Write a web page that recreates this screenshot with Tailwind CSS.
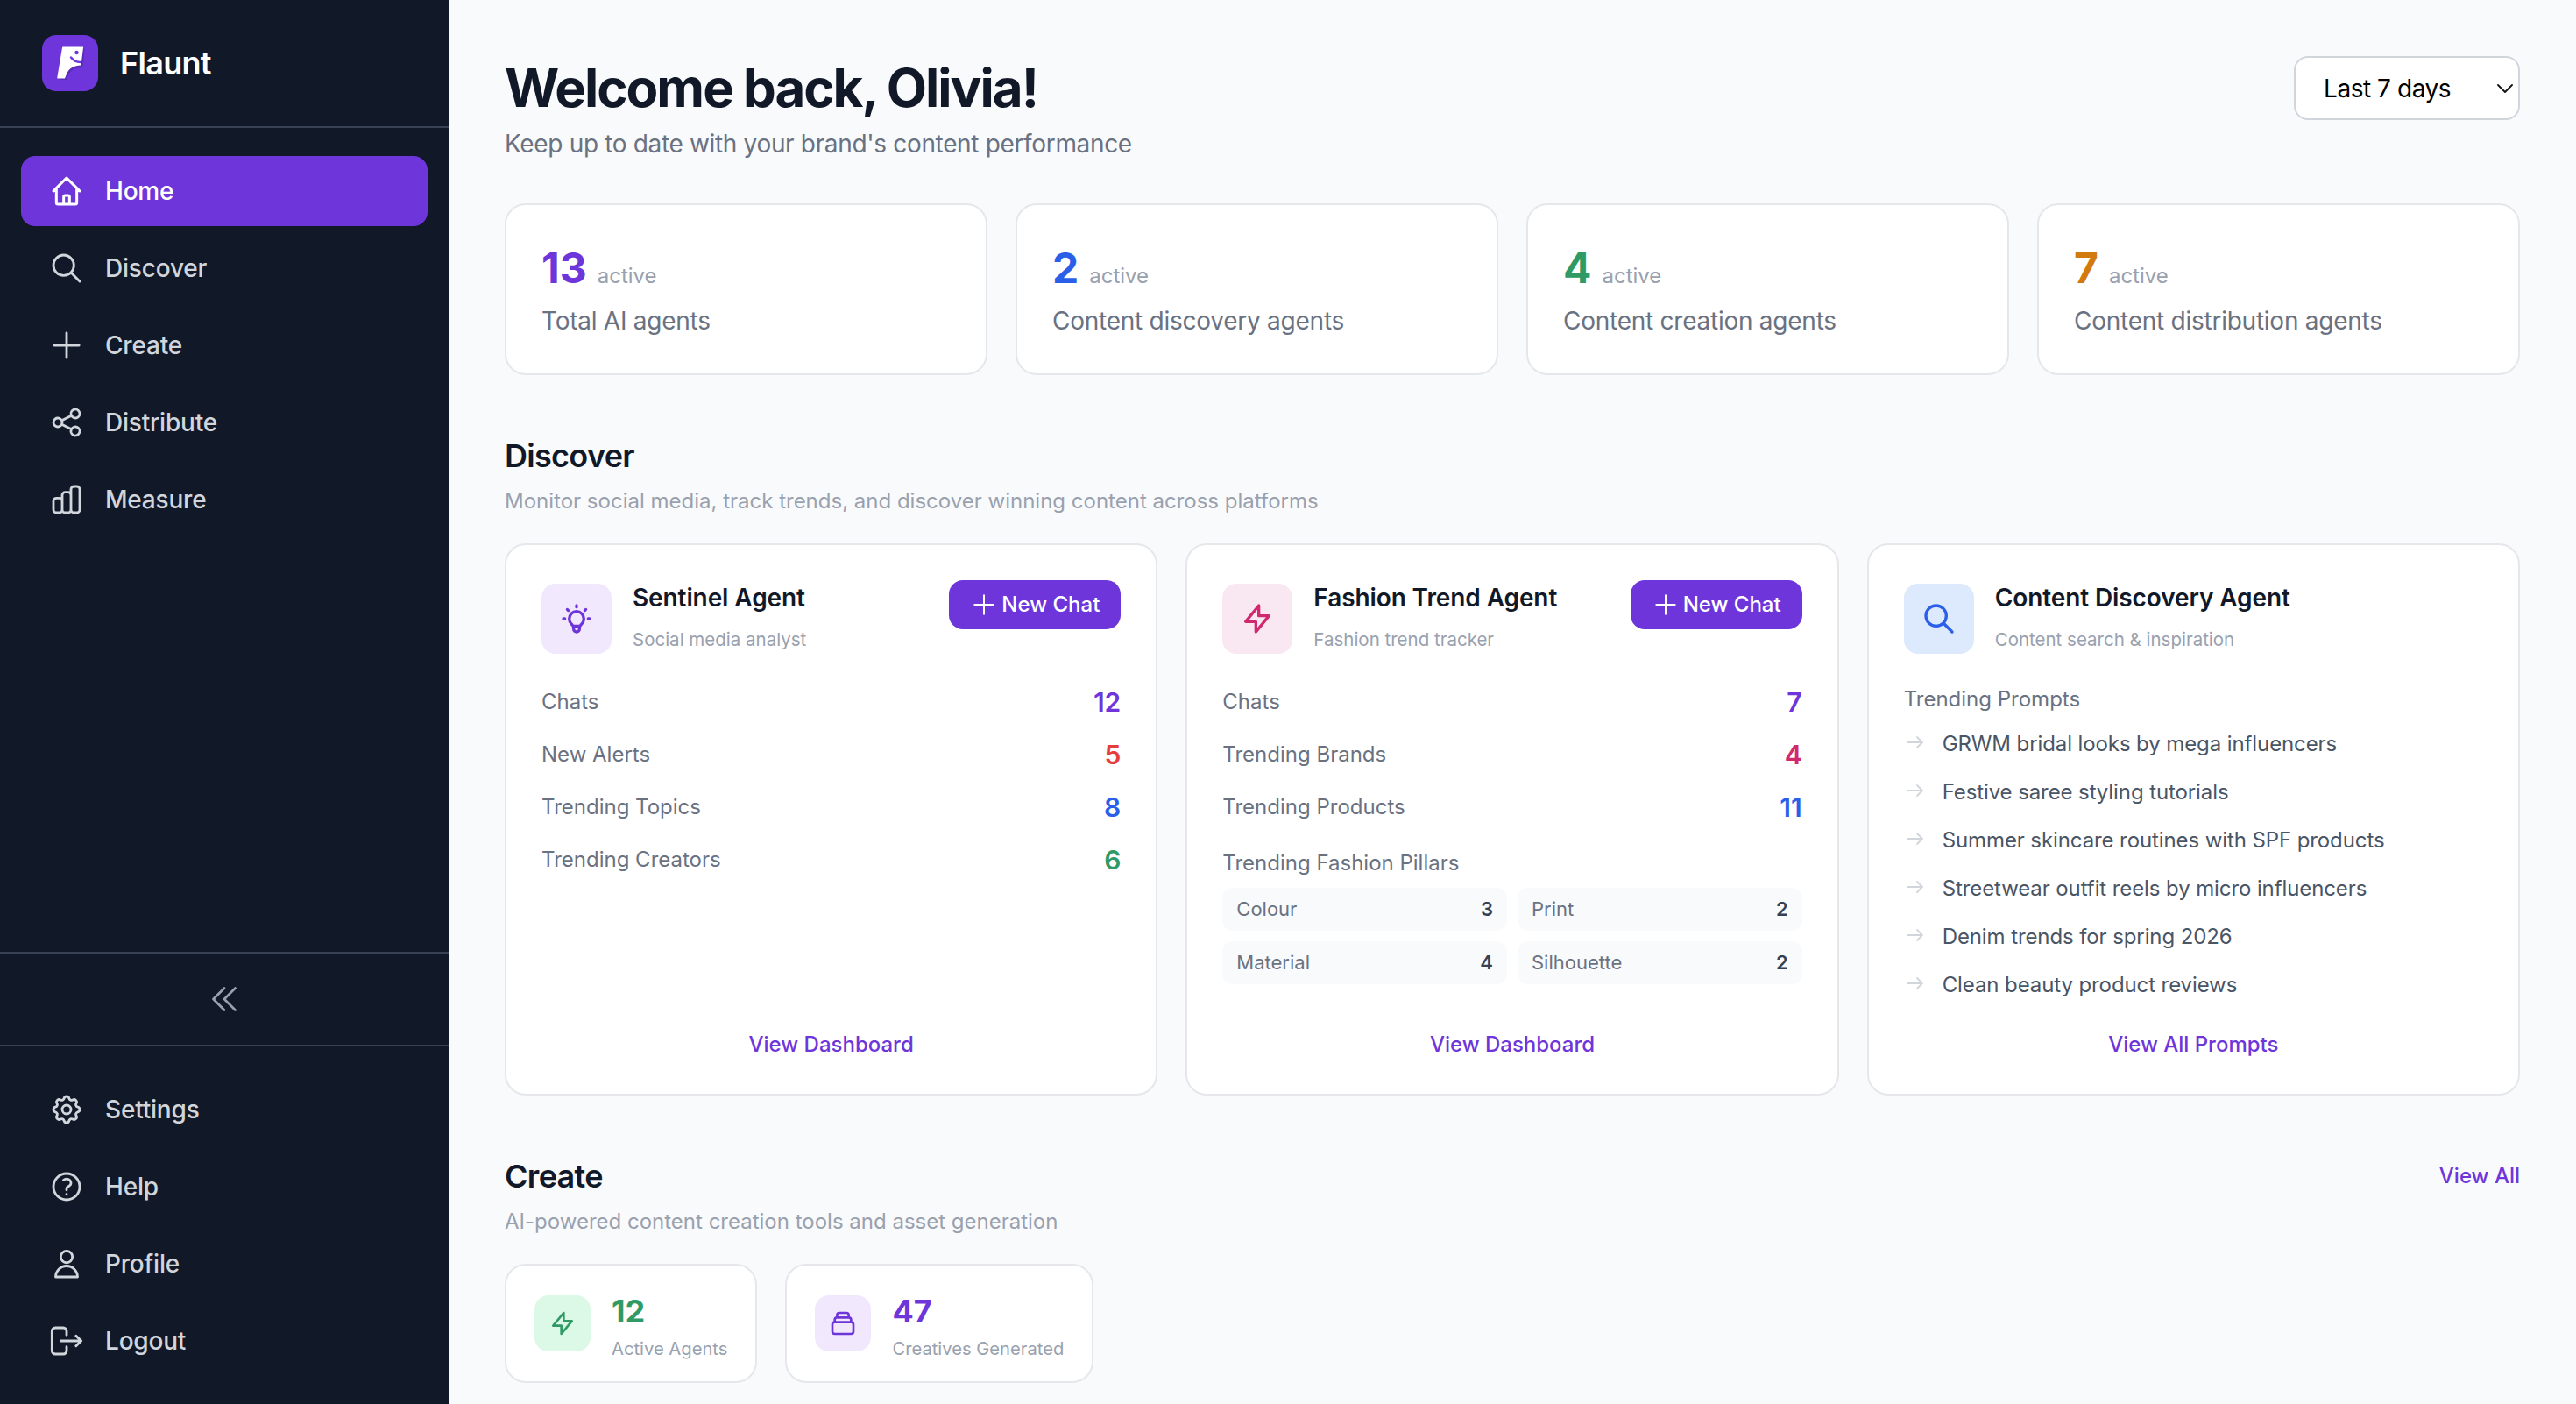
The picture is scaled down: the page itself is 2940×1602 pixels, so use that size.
<!DOCTYPE html>
<html lang="en">
<head>
    <meta charset="UTF-8">
    <meta name="viewport" content="width=device-width, initial-scale=1.0">
    <title>Flaunt Dashboard</title>
    <script src="https://cdn.jsdelivr.net/npm/@tailwindcss/browser@4"></script>
</head>
<body class="bg-gray-50 font-[Inter,sans-serif] antialiased">
<div class="flex h-[1602px] w-[2940px] overflow-hidden">

    <!-- Sidebar -->
    <aside class="flex w-[512px] shrink-0 flex-col bg-[#111827]">
        <div class="flex h-[146px] items-center gap-[25px] border-b-2 border-gray-700 px-[48px]">
            <svg class="h-[64px] w-[64px] shrink-0" viewBox="0 0 64 64">
                <rect width="64" height="64" rx="16" fill="#6e36da"/>
                <path d="M25.5 15.5H48.5L46.5 37C38 37.5 32 40 29.5 46.5L28 51H19.5Z" fill="#5a2bbb"/>
                <path d="M24 13.5H46.5C47 13.5 47 14 47 14.5L44.5 34.5C36 35 30.5 38 28 44.5L26 49.5H18C17.5 49.5 17.2 49 17.3 48.5L23 14.5C23 14 23.5 13.5 24 13.5Z" fill="#fff"/>
                <circle cx="39.5" cy="20" r="2.2" fill="#6e36da"/>
                <path d="M33 25.5C36 29.5 40 31 44 31" fill="none" stroke="#6e36da" stroke-width="2.4" stroke-linecap="round"/>
            </svg>
            <span class="text-[36px] leading-[44px] font-semibold tracking-[-0.7px] text-white">Flaunt</span>
        </div>

        <nav class="flex flex-1 flex-col gap-[8px] p-[24px] pt-[32px]">
            <a class="flex h-[80px] items-center gap-[24px] rounded-[16px] bg-[#6e36da] px-[32px] text-[28px] font-medium tracking-[-0.2px] text-white">
                <svg class="h-[40px] w-[40px]" fill="none" stroke="currentColor" stroke-width="1.8" stroke-linecap="round" stroke-linejoin="round" viewBox="0 0 24 24"><path d="M3 12l2-2m0 0l7-7 7 7M5 10v10a1 1 0 001 1h3m10-11l2 2m-2-2v10a1 1 0 01-1 1h-3m-6 0a1 1 0 001-1v-4a1 1 0 011-1h2a1 1 0 011 1v4a1 1 0 001 1m-6 0h6"/></svg>
                Home
            </a>
            <a class="flex h-[80px] items-center gap-[24px] rounded-[16px] px-[32px] text-[28px] font-medium tracking-[-0.2px] text-gray-300">
                <svg class="h-[40px] w-[40px]" fill="none" stroke="currentColor" stroke-width="1.7" stroke-linecap="round" stroke-linejoin="round" viewBox="0 0 24 24"><path d="M21 21l-6-6m2-5a7 7 0 11-14 0 7 7 0 0114 0z"/></svg>
                Discover
            </a>
            <a class="flex h-[80px] items-center gap-[24px] rounded-[16px] px-[32px] text-[28px] font-medium tracking-[-0.2px] text-gray-300">
                <svg class="h-[40px] w-[40px]" fill="none" stroke="currentColor" stroke-width="1.7" stroke-linecap="round" stroke-linejoin="round" viewBox="0 0 24 24"><path d="M12 3.5v17m8.5-8.5h-17"/></svg>
                Create
            </a>
            <a class="flex h-[80px] items-center gap-[24px] rounded-[16px] px-[32px] text-[28px] font-medium tracking-[-0.2px] text-gray-300">
                <svg class="h-[40px] w-[40px]" fill="none" stroke="currentColor" stroke-width="1.7" stroke-linecap="round" stroke-linejoin="round" viewBox="0 0 24 24"><path d="M8.684 13.342C8.886 12.938 9 12.482 9 12c0-.482-.114-.938-.316-1.342m0 2.684a3 3 0 110-2.684m0 2.684l6.632 3.316m-6.632-6l6.632-3.316m0 0a3 3 0 105.367-2.684 3 3 0 00-5.367 2.684zm0 9.316a3 3 0 105.368 2.684 3 3 0 00-5.368-2.684z"/></svg>
                Distribute
            </a>
            <a class="flex h-[80px] items-center gap-[24px] rounded-[16px] px-[32px] text-[28px] font-medium tracking-[-0.2px] text-gray-300">
                <svg class="h-[40px] w-[40px]" fill="none" stroke="currentColor" stroke-width="1.7" stroke-linecap="round" stroke-linejoin="round" viewBox="0 0 24 24"><path d="M9 19v-6a2 2 0 00-2-2H5a2 2 0 00-2 2v6a2 2 0 002 2h2a2 2 0 002-2zm0 0V9a2 2 0 012-2h2a2 2 0 012 2v10m-6 0a2 2 0 002 2h2a2 2 0 002-2m0 0V5a2 2 0 012-2h2a2 2 0 012 2v14a2 2 0 01-2 2h-2a2 2 0 01-2-2z"/></svg>
                Measure
            </a>
        </nav>

        <div class="flex h-[108px] items-center justify-center border-y-2 border-gray-700 text-gray-400">
            <svg class="h-[40px] w-[40px]" fill="none" stroke="currentColor" stroke-width="1.6" stroke-linecap="round" stroke-linejoin="round" viewBox="0 0 24 24"><path d="M19.5 19.5L12 12l7.5-7.5M12 19.5L4.5 12 12 4.5"/></svg>
        </div>

        <div class="flex flex-col gap-[8px] p-[24px] pt-[32px] pb-[32px]">
            <a class="flex h-[80px] items-center gap-[24px] px-[32px] text-[28px] font-medium tracking-[-0.2px] text-gray-300">
                <svg class="h-[40px] w-[40px]" fill="none" stroke="currentColor" stroke-width="1.7" stroke-linecap="round" stroke-linejoin="round" viewBox="0 0 24 24"><path d="M10.325 4.317c.426-1.756 2.924-1.756 3.35 0a1.724 1.724 0 002.573 1.066c1.543-.94 3.31.826 2.37 2.37a1.724 1.724 0 001.065 2.572c1.756.426 1.756 2.924 0 3.35a1.724 1.724 0 00-1.066 2.573c.94 1.543-.826 3.31-2.37 2.37a1.724 1.724 0 00-2.572 1.065c-.426 1.756-2.924 1.756-3.35 0a1.724 1.724 0 00-2.573-1.066c-1.543.94-3.31-.826-2.37-2.37a1.724 1.724 0 00-1.065-2.572c-1.756-.426-1.756-2.924 0-3.35a1.724 1.724 0 001.066-2.573c-.94-1.543.826-3.31 2.37-2.37.996.608 2.296.07 2.572-1.065z"/><path d="M15 12a3 3 0 11-6 0 3 3 0 016 0z"/></svg>
                Settings
            </a>
            <a class="flex h-[80px] items-center gap-[24px] px-[32px] text-[28px] font-medium tracking-[-0.2px] text-gray-300">
                <svg class="h-[40px] w-[40px]" fill="none" stroke="currentColor" stroke-width="1.7" stroke-linecap="round" stroke-linejoin="round" viewBox="0 0 24 24"><path d="M9.879 7.519c1.171-1.025 3.071-1.025 4.242 0 1.172 1.025 1.172 2.687 0 3.712-.203.179-.43.326-.67.442-.745.361-1.45.999-1.45 1.827v.75M21 12a9 9 0 11-18 0 9 9 0 0118 0zm-9 5.25h.008v.008H12v-.008z"/></svg>
                Help
            </a>
            <a class="flex h-[80px] items-center gap-[24px] px-[32px] text-[28px] font-medium tracking-[-0.2px] text-gray-300">
                <svg class="h-[40px] w-[40px]" fill="none" stroke="currentColor" stroke-width="1.7" stroke-linecap="round" stroke-linejoin="round" viewBox="0 0 24 24"><path d="M16 7.25a4 4 0 11-8 0 4 4 0 018 0z"/><path d="M4.5 21a7.5 7.5 0 0115 0z"/></svg>
                Profile
            </a>
            <a class="flex h-[80px] items-center gap-[24px] px-[32px] text-[28px] font-medium tracking-[-0.2px] text-gray-300">
                <svg class="h-[40px] w-[40px]" fill="none" stroke="currentColor" stroke-width="1.7" stroke-linecap="round" stroke-linejoin="round" viewBox="0 0 24 24"><path d="M12 8V5.25A2.25 2.25 0 009.75 3h-5.5A2.25 2.25 0 002 5.25v13.5A2.25 2.25 0 004.25 21h5.5A2.25 2.25 0 0012 18.75V16M8 12h14m-3.5-3.5L22 12l-3.5 3.5"/></svg>
                Logout
            </a>
        </div>
    </aside>

    <!-- Main -->
    <main class="min-w-0 flex-1 px-[64px] pt-[64px]">
        <div class="flex items-start justify-between">
            <div>
                <h1 class="text-[60px] leading-[72px] font-bold tracking-[-2px] text-[#111827]">Welcome back, Olivia!</h1>
                <p class="mt-[8px] text-[28px] leading-[40px] tracking-[-0.34px] text-gray-500">Keep up to date with your brand's content performance</p>
            </div>
            <div class="relative">
                <select class="h-[73px] w-[258px] appearance-none rounded-[16px] border-2 border-gray-300 bg-white pl-[32px] text-[28px] tracking-[-0.45px] text-black">
                    <option>Last 7 days</option>
                </select>
                <svg class="absolute top-[32px] right-[8px] h-[10px] w-[18px]" fill="none" stroke="#111" stroke-width="1.8" stroke-linecap="round" stroke-linejoin="round" viewBox="0 0 18 10"><path d="M1 1l8 8 8-8"/></svg>
            </div>
        </div>

        <!-- Stat cards -->
        <div class="mt-[48px] grid grid-cols-4 gap-[32px]">
            <div class="h-[196px] rounded-[24px] border-2 border-gray-200 bg-white p-[40px]">
                <div class="flex h-[64px] items-baseline gap-[12px]"><span class="text-[48px] leading-[64px] font-bold text-[#6e36da]">13</span><span class="text-[24px] text-gray-400">active</span></div>
                <p class="mt-[8px] text-[28px] leading-[40px] tracking-[-0.25px] text-gray-500">Total AI agents</p>
            </div>
            <div class="h-[196px] rounded-[24px] border-2 border-gray-200 bg-white p-[40px]">
                <div class="flex h-[64px] items-baseline gap-[12px]"><span class="text-[48px] leading-[64px] font-bold text-[#2c5fe8]">2</span><span class="text-[24px] text-gray-400">active</span></div>
                <p class="mt-[8px] text-[28px] leading-[40px] tracking-[-0.25px] text-gray-500">Content discovery agents</p>
            </div>
            <div class="h-[196px] rounded-[24px] border-2 border-gray-200 bg-white p-[40px]">
                <div class="flex h-[64px] items-baseline gap-[12px]"><span class="text-[48px] leading-[64px] font-bold text-[#2f9a64]">4</span><span class="text-[24px] text-gray-400">active</span></div>
                <p class="mt-[8px] text-[28px] leading-[40px] tracking-[-0.25px] text-gray-500">Content creation agents</p>
            </div>
            <div class="h-[196px] rounded-[24px] border-2 border-gray-200 bg-white p-[40px]">
                <div class="flex h-[64px] items-baseline gap-[12px]"><span class="text-[48px] leading-[64px] font-bold text-[#d27a0e]">7</span><span class="text-[24px] text-gray-400">active</span></div>
                <p class="mt-[8px] text-[28px] leading-[40px] tracking-[-0.25px] text-gray-500">Content distribution agents</p>
            </div>
        </div>

        <!-- Discover -->
        <h2 class="mt-[64px] text-[36px] leading-[56px] font-semibold tracking-[-0.7px] text-[#111827]">Discover</h2>
        <p class="mt-[8px] text-[24px] leading-[32px] text-gray-400">Monitor social media, track trends, and discover winning content across platforms</p>

        <div class="mt-[32px] grid h-[630px] grid-cols-3 gap-[32px]">
            <!-- Sentinel -->
            <div class="flex flex-col rounded-[24px] border-2 border-gray-200 bg-white p-[40px]">
                <div class="flex items-start justify-between">
                    <div class="flex items-center gap-[24px]">
                        <div class="flex h-[80px] w-[80px] items-center justify-center rounded-[16px] bg-[#f1e8fd] text-[#6e36da]">
                            <svg class="h-[40px] w-[40px]" fill="none" stroke="currentColor" stroke-width="2" stroke-linecap="round" stroke-linejoin="round" viewBox="0 0 24 24"><path d="M9.663 17h4.673M12 3v1m6.364 1.636l-.707.707M21 12h-1M4 12H3m3.343-5.657l-.707-.707m2.828 9.9a5 5 0 117.072 0l-.548.547A3.374 3.374 0 0014 18.469V19a2 2 0 11-4 0v-.531c0-.895-.356-1.754-.988-2.386l-.548-.547z"/></svg>
                        </div>
                        <div>
                            <h3 class="text-[28px] leading-[40px] font-semibold tracking-[-0.1px] text-[#111827]">Sentinel Agent</h3>
                            <p class="mt-[8px] text-[20.5px] leading-[40px] text-gray-400">Social media analyst</p>
                        </div>
                    </div>
                    <button class="flex h-[56px] items-center gap-[4px] rounded-[16px] bg-[#6e36da] px-[24px] text-[24px] font-medium text-white">
                        <svg class="h-[32px] w-[32px]" fill="none" stroke="currentColor" stroke-width="1.5" stroke-linecap="round" stroke-linejoin="round" viewBox="0 0 24 24"><path d="M12 4v16m8-8H4"/></svg>
                        New Chat
                    </button>
                </div>
                <div class="mt-[29px] flex flex-col gap-[16px]">
                    <div class="flex h-[44px] items-center justify-between"><span class="text-[24px] text-gray-500">Chats</span><span class="text-[30px] font-semibold text-[#6e36da]">12</span></div>
                    <div class="flex h-[44px] items-center justify-between"><span class="text-[24px] text-gray-500">New Alerts</span><span class="text-[30px] font-semibold text-[#e53e3e]">5</span></div>
                    <div class="flex h-[44px] items-center justify-between"><span class="text-[24px] text-gray-500">Trending Topics</span><span class="text-[30px] font-semibold text-[#2c5fe8]">8</span></div>
                    <div class="flex h-[44px] items-center justify-between"><span class="text-[24px] text-gray-500">Trending Creators</span><span class="text-[30px] font-semibold text-[#2f9a64]">6</span></div>
                </div>
                <a class="mt-auto text-center text-[24px] leading-[32px] font-medium text-[#6e36da]">View Dashboard</a>
            </div>

            <!-- Fashion Trend -->
            <div class="flex flex-col rounded-[24px] border-2 border-gray-200 bg-white p-[40px]">
                <div class="flex items-start justify-between">
                    <div class="flex items-center gap-[24px]">
                        <div class="flex h-[80px] w-[80px] items-center justify-center rounded-[16px] bg-[#f9e7f2] text-[#d1296f]">
                            <svg class="h-[40px] w-[40px]" fill="none" stroke="currentColor" stroke-width="2" stroke-linecap="round" stroke-linejoin="round" viewBox="0 0 24 24"><path d="M13 10V3L4 14h7v7l9-11h-7z"/></svg>
                        </div>
                        <div>
                            <h3 class="text-[28px] leading-[40px] font-semibold tracking-[-0.1px] text-[#111827]">Fashion Trend Agent</h3>
                            <p class="mt-[8px] text-[20.5px] leading-[40px] text-gray-400">Fashion trend tracker</p>
                        </div>
                    </div>
                    <button class="flex h-[56px] items-center gap-[4px] rounded-[16px] bg-[#6e36da] px-[24px] text-[24px] font-medium text-white">
                        <svg class="h-[32px] w-[32px]" fill="none" stroke="currentColor" stroke-width="1.5" stroke-linecap="round" stroke-linejoin="round" viewBox="0 0 24 24"><path d="M12 4v16m8-8H4"/></svg>
                        New Chat
                    </button>
                </div>
                <div class="mt-[29px] flex flex-col gap-[16px]">
                    <div class="flex h-[44px] items-center justify-between"><span class="text-[24px] text-gray-500">Chats</span><span class="text-[30px] font-semibold text-[#6e36da]">7</span></div>
                    <div class="flex h-[44px] items-center justify-between"><span class="text-[24px] text-gray-500">Trending Brands</span><span class="text-[30px] font-semibold text-[#d1296f]">4</span></div>
                    <div class="flex h-[44px] items-center justify-between"><span class="text-[24px] text-gray-500">Trending Products</span><span class="text-[30px] font-semibold text-[#2c5fe8]">11</span></div>
                </div>
                <p class="mt-[24px] text-[24px] leading-[36px] text-gray-500">Trending Fashion Pillars</p>
                <div class="mt-[10px] grid grid-cols-2 gap-[12px]">
                    <div class="flex h-[49px] items-center justify-between rounded-[12px] bg-gray-50 px-[16px] text-[22px]"><span class="text-gray-500">Colour</span><span class="font-semibold text-gray-700">3</span></div>
                    <div class="flex h-[49px] items-center justify-between rounded-[12px] bg-gray-50 px-[16px] text-[22px]"><span class="text-gray-500">Print</span><span class="font-semibold text-gray-700">2</span></div>
                    <div class="flex h-[49px] items-center justify-between rounded-[12px] bg-gray-50 px-[16px] text-[22px]"><span class="text-gray-500">Material</span><span class="font-semibold text-gray-700">4</span></div>
                    <div class="flex h-[49px] items-center justify-between rounded-[12px] bg-gray-50 px-[16px] text-[22px]"><span class="text-gray-500">Silhouette</span><span class="font-semibold text-gray-700">2</span></div>
                </div>
                <a class="mt-auto text-center text-[24px] leading-[32px] font-medium text-[#6e36da]">View Dashboard</a>
            </div>

            <!-- Content Discovery -->
            <div class="flex flex-col rounded-[24px] border-2 border-gray-200 bg-white p-[40px]">
                <div class="flex items-center gap-[24px]">
                    <div class="flex h-[80px] w-[80px] items-center justify-center rounded-[16px] bg-[#dde9fd] text-[#2c5fe8]">
                        <svg class="h-[40px] w-[40px]" fill="none" stroke="currentColor" stroke-width="2" stroke-linecap="round" stroke-linejoin="round" viewBox="0 0 24 24"><path d="M21 21l-6-6m2-5a7 7 0 11-14 0 7 7 0 0114 0z"/></svg>
                    </div>
                    <div>
                        <h3 class="text-[28px] leading-[40px] font-semibold tracking-[-0.1px] text-[#111827]">Content Discovery Agent</h3>
                        <p class="mt-[8px] text-[20.5px] leading-[40px] text-gray-400">Content search &amp; inspiration</p>
                    </div>
                </div>
                <p class="mt-[30px] text-[24px] leading-[36px] text-gray-500">Trending Prompts</p>
                <ul class="mt-[13px] flex flex-col gap-[16px] text-[24px] tracking-[-0.1px] text-gray-600">
                    <li class="flex h-[39px] items-center gap-[20px]"><svg class="-mt-[4px] h-[24px] w-[24px] text-gray-300" fill="none" stroke="currentColor" stroke-width="1.8" stroke-linecap="round" stroke-linejoin="round" viewBox="0 0 24 24"><path d="M4 12h17m-6-6l6 6-6 6"/></svg>GRWM bridal looks by mega influencers</li>
                    <li class="flex h-[39px] items-center gap-[20px]"><svg class="-mt-[4px] h-[24px] w-[24px] text-gray-300" fill="none" stroke="currentColor" stroke-width="1.8" stroke-linecap="round" stroke-linejoin="round" viewBox="0 0 24 24"><path d="M4 12h17m-6-6l6 6-6 6"/></svg>Festive saree styling tutorials</li>
                    <li class="flex h-[39px] items-center gap-[20px]"><svg class="-mt-[4px] h-[24px] w-[24px] text-gray-300" fill="none" stroke="currentColor" stroke-width="1.8" stroke-linecap="round" stroke-linejoin="round" viewBox="0 0 24 24"><path d="M4 12h17m-6-6l6 6-6 6"/></svg>Summer skincare routines with SPF products</li>
                    <li class="flex h-[39px] items-center gap-[20px]"><svg class="-mt-[4px] h-[24px] w-[24px] text-gray-300" fill="none" stroke="currentColor" stroke-width="1.8" stroke-linecap="round" stroke-linejoin="round" viewBox="0 0 24 24"><path d="M4 12h17m-6-6l6 6-6 6"/></svg>Streetwear outfit reels by micro influencers</li>
                    <li class="flex h-[39px] items-center gap-[20px]"><svg class="-mt-[4px] h-[24px] w-[24px] text-gray-300" fill="none" stroke="currentColor" stroke-width="1.8" stroke-linecap="round" stroke-linejoin="round" viewBox="0 0 24 24"><path d="M4 12h17m-6-6l6 6-6 6"/></svg>Denim trends for spring 2026</li>
                    <li class="flex h-[39px] items-center gap-[20px]"><svg class="-mt-[4px] h-[24px] w-[24px] text-gray-300" fill="none" stroke="currentColor" stroke-width="1.8" stroke-linecap="round" stroke-linejoin="round" viewBox="0 0 24 24"><path d="M4 12h17m-6-6l6 6-6 6"/></svg>Clean beauty product reviews</li>
                </ul>
                <a class="mt-auto text-center text-[24px] leading-[32px] font-medium text-[#6e36da]">View All Prompts</a>
            </div>
        </div>

        <!-- Create -->
        <div class="mt-[64px] flex items-center justify-between">
            <h2 class="text-[36px] leading-[56px] font-semibold tracking-[-0.7px] text-[#111827]">Create</h2>
            <a class="text-[24px] font-medium text-[#6e36da]">View All</a>
        </div>
        <p class="mt-[8px] text-[24px] leading-[32px] text-gray-400">AI-powered content creation tools and asset generation</p>

        <div class="mt-[32px] flex gap-[32px]">
            <div class="flex h-[136px] items-center gap-[24px] rounded-[24px] border-2 border-gray-200 bg-white px-[32px]">
                <div class="flex h-[64px] w-[64px] items-center justify-center rounded-[16px] bg-[#dcf8e6] text-[#2f9a64]">
                    <svg class="h-[32px] w-[32px]" fill="none" stroke="currentColor" stroke-width="2" stroke-linecap="round" stroke-linejoin="round" viewBox="0 0 24 24"><path d="M13 10V3L4 14h7v7l9-11h-7z"/></svg>
                </div>
                <div class="h-[68px]">
                    <div class="text-[36px] leading-[40px] font-bold text-[#2f9a64]">12</div>
                    <div class="mt-[11px] text-[20.2px] leading-[24px] text-gray-400">Active Agents</div>
                </div>
            </div>
            <div class="flex h-[136px] items-center gap-[24px] rounded-[24px] border-2 border-gray-200 bg-white px-[32px]">
                <div class="flex h-[64px] w-[64px] items-center justify-center rounded-[16px] bg-[#f1e8fd] text-[#6e36da]">
                    <svg class="h-[32px] w-[32px]" fill="none" stroke="currentColor" stroke-width="2" stroke-linecap="round" stroke-linejoin="round" viewBox="0 0 24 24"><path d="M19 11H5m14 0a2 2 0 012 2v6a2 2 0 01-2 2H5a2 2 0 01-2-2v-6a2 2 0 012-2m14 0V9a2 2 0 00-2-2M5 11V9a2 2 0 012-2m0 0V5a2 2 0 012-2h6a2 2 0 012 2v2M7 7h10"/></svg>
                </div>
                <div class="h-[68px]">
                    <div class="text-[36px] leading-[40px] font-bold text-[#6e36da]">47</div>
                    <div class="mt-[11px] text-[20.2px] leading-[24px] text-gray-400">Creatives Generated</div>
                </div>
            </div>
        </div>
    </main>
</div>
</body>
</html>
